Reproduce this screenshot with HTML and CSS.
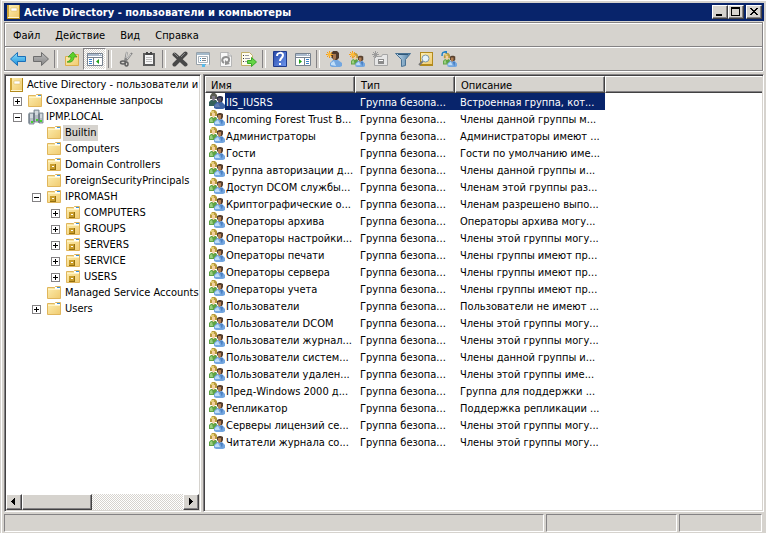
FILE: index.html
```html
<!DOCTYPE html>
<html lang="ru">
<head>
    <meta charset="UTF-8">
    <meta name="viewport" content="width=device-width, initial-scale=1.0">
    <title>Active Directory - пользователи и компьютеры</title>
    <link rel="stylesheet" href="styles.css">
</head>
<body>
    <!-- shared icons -->
    <svg class="sprite" aria-hidden="true">
        <defs>
            <linearGradient id="gold" x1="0" y1="0" x2="1" y2="1"><stop offset="0" stop-color="#fdeeb0"/><stop offset="1" stop-color="#f0cb70"/></linearGradient>
            <linearGradient id="blue" x1="0" y1="0" x2="0" y2="1"><stop offset="0" stop-color="#8fe0fb"/><stop offset="1" stop-color="#1a8fdb"/></linearGradient>
            <linearGradient id="grey" x1="0" y1="0" x2="0" y2="1"><stop offset="0" stop-color="#bdbdbd"/><stop offset="1" stop-color="#858585"/></linearGradient>
            <linearGradient id="help" x1="0" y1="0" x2="1" y2="1"><stop offset="0" stop-color="#2748a8"/><stop offset="1" stop-color="#6e97ee"/></linearGradient>
            <linearGradient id="steel" x1="0" y1="0" x2="1" y2="0"><stop offset="0" stop-color="#cfe4f2"/><stop offset="1" stop-color="#4a7ba3"/></linearGradient>
            <symbol id="i-book" viewBox="0 0 16 16">
                <path d="M1 1h13v14H1z" fill="#b28a1c"/>
                <path d="M2 1h11v12H2z" fill="url(#gold)"/>
                <path d="M1 1h2v13H1z" fill="#cfa536"/>
                <path d="M5 4h6v3H5z" fill="#fff" stroke="#d8b65a" stroke-width=".5"/>
                <path d="M2 13h11v1H2z" fill="#fff6d0"/>
            </symbol>
            <symbol id="i-folder" viewBox="0 0 16 16">
                <path d="M.5 2.500h7l1-1h5v12H.5z" fill="url(#gold)" stroke="#e0b65c"/>
                <path d="M8 2h5v2H8z" fill="#fff"/>
                <path d="M10 2h3v1h-3z" fill="#3c93dc"/>
                <path d="M1 4.500h12" stroke="#fff3c4"/>
            </symbol>
            <symbol id="i-ou" viewBox="0 0 16 16">
                <use href="#i-folder"/>
                <path d="M3 7h6v6H3z" fill="#94700f"/>
                <path d="M3 7h5v5H3z" fill="#c99d2c"/>
                <path d="M5 9h2v1H5z" fill="#fff"/>
            </symbol>
            <symbol id="i-domain" viewBox="0 0 16 16">
                <path d="M6 1h5v12H6zM1 4h5v11H1zM11 4h4v10h-4z" fill="#b5bdc4" stroke="#72808c" stroke-width=".8"/>
                <path d="M7 3h3M7 5h3M2 6h3M2 8h3M12 6h2M12 8h2" stroke="#eef3f6"/>
                <path d="M6 4v9M1 5v9M11 5v9" stroke="#53616e" stroke-width=".8"/>
                <path d="M3 12h2v2H3zM8 10h2v2H8zM12 11h2v2h-2z" fill="#45d12e"/>
            </symbol>
            <symbol id="i-group" viewBox="0 0 16 16">
                <path d="M0 13V9l2-2h5l2 3v3z" fill="#5ea344"/>
                <path d="M1 12V9l2-1 1 4z" fill="#9ccf80"/>
                <path d="M1 3l2-3h3l2 2v4H6L3 6H1z" fill="#b89a3c"/>
                <path d="M2 1h3v2H2z" fill="#e4cf76"/>
                <path d="M3 3h3v3l-1 2H4L3 6z" fill="#f3cfa0"/>
                <path d="M5 15v-3l3-3h5l3 3v3l-2 1H7z" fill="#74a7e0"/>
                <path d="M6 14v-2l3-2 2 4z" fill="#bddcf8"/>
                <path d="M11 10l2 5 1-5z" fill="#4a80c2"/>
                <path d="M8 4l2-1h2l2 1v3l-1 2h-3L8 7z" fill="#57402f"/>
                <path d="M9 5h3v3l-1 2h-1L9 8z" fill="#b27e52"/>
            </symbol>
            <symbol id="i-group-dark" viewBox="0 0 16 16">
                <path d="M0 13V9l2-2h5l2 3v3z" fill="#33605a"/>
                <path d="M1 3l2-3h3l2 2v4H6L3 6H1z" fill="#5b5d53"/>
                <path d="M3 3h3v3l-1 2H4L3 6z" fill="#7c7786"/>
                <path d="M5 15v-3l3-3h5l3 3v3l-2 1H7z" fill="#3e64a6"/>
                <path d="M6 14v-2l3-2 2 4z" fill="#627eb2"/>
                <path d="M8 4l2-1h2l2 1v3l-1 2h-3L8 7z" fill="#2d3049"/>
                <path d="M9 5h3v3l-1 2h-1L9 8z" fill="#5a4f60"/>
            </symbol>
            <symbol id="i-star" viewBox="0 0 8 8">
                <path d="M3.500 0v7M0 3.500h7M1 1l5 5M6 1L1 6" stroke="#f49a16"/>
                <circle cx="3.500" cy="3.500" r="2" fill="#fdbb3a"/>
            </symbol>
        </defs>
    </svg>

    <div class="window">
        <header class="title-bar">
            <svg class="icon"><use href="#i-book"/></svg>
            <h1>Active Directory - пользователи и компьютеры</h1>
            <div class="window-buttons">
                <button type="button" class="raised" aria-label="Свернуть"><svg viewBox="0 0 12 10"><path d="M2 7h6v2H2z"/></svg></button>
                <button type="button" class="raised" aria-label="Развернуть"><svg viewBox="0 0 12 10"><path d="M1 0h9v9H1zM2 2v6h7V2z" fill-rule="evenodd"/></svg></button>
                <button type="button" class="raised close" aria-label="Закрыть"><svg viewBox="0 0 12 10"><path d="M2 1h2v1h1v1h2V2h1V1h2v1H9v1H8v1H7v1h1v1h1v1h1v1H8V7H7V6H5v1H4v1H2V7h1V6h1V5h1V4H4V3H3V2H2z"/></svg></button>
            </div>
        </header>

        <div class="bars">
            <nav class="menu">
                <button type="button">Файл</button>
                <button type="button">Действие</button>
                <button type="button">Вид</button>
                <button type="button">Справка</button>
            </nav>
            <div class="toolbar">
                <button type="button" aria-label="Назад"><svg class="icon" viewBox="0 0 16 16"><path d="M.5 8L7.500 1.500v4h8v5h-8v4z" fill="url(#blue)" stroke="#1b6fb8"/></svg></button>
                <button type="button" aria-label="Вперед"><svg class="icon" viewBox="0 0 16 16"><path d="M15.500 8L8.500 1.500v4h-8v5h8v4z" fill="url(#grey)" stroke="#6d6d6d"/></svg></button>
                <span class="separator"></span>
                <button type="button" aria-label="На уровень вверх"><svg class="icon" viewBox="0 0 16 16"><path d="M1.500 5.500h6l1-2h6v11h-13z" fill="url(#gold)" stroke="#dcae4e"/><path d="M3 11c3-1 4-3 4-5H4l5-5 4 5h-3c0 4-3 6-7 5z" fill="#5bd12b" stroke="#35951a" stroke-width=".7"/></svg></button>
                <button type="button" class="pressed" aria-label="Дерево консоли"><svg class="icon" viewBox="0 0 16 16"><path d="M.5 2.500h15v12H.5z" fill="#fff" stroke="#77828f"/><path d="M1 3h14v2H1z" fill="#a9b9cc"/><path d="M12 3h1v1h-1zM14 3h1v1h-1z" fill="#fff"/><path d="M1 6.500h14M6.500 7v7" stroke="#77828f"/><path d="M2 8.500h3M2 10.500h3M2 12.500h3" stroke="#3881ca"/><path d="M12 8v5l-3-2.500z" fill="#22a51c"/></svg></button>
                <span class="separator"></span>
                <button type="button" aria-label="Вырезать"><svg class="icon" viewBox="0 0 16 16"><path d="M9 1L7 10M14 2L7 11" stroke="#858585" stroke-width="2"/><path d="M9 1L8 7M13 3L9 8" stroke="#d5d5d5"/><ellipse cx="5" cy="11.500" rx="2.500" ry="1.500" fill="none" stroke="#606060" stroke-width="1.500"/><ellipse cx="8.500" cy="13" rx="1.500" ry="2" fill="none" stroke="#606060" stroke-width="1.500"/></svg></button>
                <button type="button" aria-label="Копировать"><svg class="icon" viewBox="0 0 16 16"><path d="M2 2h12v13H2z" fill="#5c5c5c"/><path d="M4 4h8v9H4z" fill="#f7f7f7"/><path d="M5 1h6v3H5z" fill="#444"/><path d="M7 1h2v1H7z" fill="#ddd"/><path d="M5 6.500h6M5 8.500h6M5 10.500h6" stroke="#bbb"/></svg></button>
                <span class="separator"></span>
                <button type="button" aria-label="Удалить"><svg class="icon" viewBox="0 0 16 16"><path d="M2.500 3.500l11 10M13.500 2.500l-11 11" stroke="#484848" stroke-width="4" stroke-linecap="round"/><path d="M2 2l4 4M13 2L9 6" stroke="#888"/></svg></button>
                <button type="button" aria-label="Свойства"><svg class="icon" viewBox="0 0 16 16"><path d="M1.500 1.500h13v12h-13z" fill="#fff" stroke="#98a2aa"/><path d="M2 2h12v2H2z" fill="#a3b9ca"/><path d="M3.500 5.500h9v6h-9z" fill="none" stroke="#a9b4bd"/><path d="M5 7h1v1H5zM5 9h1v1H5z" fill="#2a9ad8"/><path d="M7 7.500h4M7 9.500h4" stroke="#7b858d"/><path d="M7 13h3v3H7z" fill="#55bbec"/><path d="M11 13h3v2h-3z" fill="#ddd"/></svg></button>
                <button type="button" aria-label="Обновить"><svg class="icon" viewBox="0 0 16 16"><path d="M2.500 1.500h8l3 3v11h-11z" fill="#f8f8f8" stroke="#b6b6b6"/><path d="M10 1v4h4" fill="#ddd" stroke="#aaa"/><path d="M6 12c-3-2-2-6 2-6 4 0 4 4 1 6" fill="none" stroke="#909090" stroke-width="2"/><path d="M7 9v5l5-1z" fill="#909090"/></svg></button>
                <button type="button" aria-label="Экспортировать список"><svg class="icon" viewBox="0 0 16 16"><path d="M.5 1.500h8l3 3v10H.5z" fill="#fffdee" stroke="#c2b16b"/><path d="M2 4.500h1M2 7.500h1M2 10.500h1" stroke="#333"/><path d="M4 4.500h4M4 7.500h5M4 10.500h2" stroke="#9b9ba8"/><path d="M6.500 9.500h4v-3L15.500 11l-5 4.500v-3h-4z" fill="#65d545" stroke="#38a829"/></svg></button>
                <span class="separator"></span>
                <button type="button" aria-label="Справка"><svg class="icon" viewBox="0 0 16 16"><path d="M1.500.5h13v15h-13z" fill="url(#help)" stroke="#203a8a"/><path d="M5 5c0-4 6-4 6-1 0 3-3 3-3 6" fill="none" stroke="#fff" stroke-width="2"/><path d="M7 12h2v2H7z" fill="#fff"/></svg></button>
                <button type="button" aria-label="Панель действий"><svg class="icon" viewBox="0 0 16 16"><path d="M.5 2.500h15v12H.5z" fill="#fff" stroke="#77828f"/><path d="M1 3h14v2H1z" fill="#a9b9cc"/><path d="M12 3h1v1h-1zM14 3h1v1h-1z" fill="#fff"/><path d="M1 6.500h14M9.500 7v7" stroke="#77828f"/><path d="M11 8.500h3M11 10.500h3M11 12.500h3" stroke="#3881ca"/><path d="M4 8v5l3-2.500z" fill="#22a51c"/></svg></button>
                <span class="separator"></span>
                <button type="button" aria-label="Создать пользователя"><svg class="icon" viewBox="0 0 16 16"><path d="M4 15v-3l3-3h5l4 3v3l-2 1H6z" fill="#74a7e0"/><path d="M5 14v-2l3-2 2 5z" fill="#c2dff8"/><path d="M5 3l2-3h4l2 2v5l-2 2H8L5 6z" fill="#4f3a2c"/><path d="M7 3h3v4l-1 2H8L7 7z" fill="#a87850"/><use href="#i-star" width="8" height="8"/></svg></button>
                <button type="button" aria-label="Создать группу"><svg class="icon" viewBox="0 0 16 16"><use href="#i-group" x="2" y="2" width="14" height="14"/><use href="#i-star" width="8" height="8"/></svg></button>
                <button type="button" aria-label="Создать подразделение"><svg class="icon" viewBox="0 0 16 16"><path d="M2.500 5.500h7l1-2h5v11h-13z" fill="#e6e6e6" stroke="#a5a5a5"/><path d="M6 8h6v5H6z" fill="#8b8b8b"/><path d="M7 9h4v1H7z" fill="#fff"/><path d="M3.500 0v7M0 3.500h7M1 1l5 5M6 1L1 6" stroke="#9a9a9a"/></svg></button>
                <button type="button" aria-label="Фильтр"><svg class="icon" viewBox="0 0 16 16"><path d="M.5 2.500h15l-5 6v6l-4 1v-7z" fill="url(#steel)" stroke="#4a7293"/><path d="M3 3.500h10" stroke="#2f5879"/></svg></button>
                <button type="button" aria-label="Найти"><svg class="icon" viewBox="0 0 16 16"><path d="M2 1h13v14H2z" fill="#b28a1c"/><path d="M3 2h11v11H3z" fill="url(#gold)"/><path d="M1 14l4-4" stroke="#777" stroke-width="2"/><circle cx="7.500" cy="7.500" r="3.500" fill="#e5f4fb" stroke="#7f98a6"/></svg></button>
                <button type="button" aria-label="Добавить в группу"><svg class="icon" viewBox="0 0 16 16"><use href="#i-group" x="2" y="2" width="14" height="14"/><path d="M1 5c0-4 1-4 4-4" fill="none" stroke="#2180c4" stroke-width="1.500"/><path d="M3 0h3v3z" fill="#2180c4"/></svg></button>
            </div>
        </div>

        <main class="panes">
            <section class="tree-pane sunken">
                <ul class="tree">
                    <li class="root"><svg class="icon"><use href="#i-book"/></svg><span>Active Directory - пользователи и</span></li>
                    <li class="level-1"><button type="button" class="toggle plus" aria-label="Развернуть"></button><svg class="icon"><use href="#i-folder"/></svg><span>Сохраненные запросы</span></li>
                    <li class="level-1"><button type="button" class="toggle" aria-label="Свернуть"></button><svg class="icon"><use href="#i-domain"/></svg><span>IPMP.LOCAL</span></li>
                    <li class="level-2"><svg class="icon"><use href="#i-folder"/></svg><span class="current">Builtin</span></li>
                    <li class="level-2"><svg class="icon"><use href="#i-folder"/></svg><span>Computers</span></li>
                    <li class="level-2"><svg class="icon"><use href="#i-ou"/></svg><span>Domain Controllers</span></li>
                    <li class="level-2"><svg class="icon"><use href="#i-folder"/></svg><span>ForeignSecurityPrincipals</span></li>
                    <li class="level-2"><button type="button" class="toggle" aria-label="Свернуть"></button><svg class="icon"><use href="#i-ou"/></svg><span>IPROMASH</span></li>
                    <li class="level-3"><button type="button" class="toggle plus" aria-label="Развернуть"></button><svg class="icon"><use href="#i-ou"/></svg><span>COMPUTERS</span></li>
                    <li class="level-3"><button type="button" class="toggle plus" aria-label="Развернуть"></button><svg class="icon"><use href="#i-ou"/></svg><span>GROUPS</span></li>
                    <li class="level-3"><button type="button" class="toggle plus" aria-label="Развернуть"></button><svg class="icon"><use href="#i-ou"/></svg><span>SERVERS</span></li>
                    <li class="level-3"><button type="button" class="toggle plus" aria-label="Развернуть"></button><svg class="icon"><use href="#i-ou"/></svg><span>SERVICE</span></li>
                    <li class="level-3"><button type="button" class="toggle plus" aria-label="Развернуть"></button><svg class="icon"><use href="#i-ou"/></svg><span>USERS</span></li>
                    <li class="level-2"><svg class="icon"><use href="#i-folder"/></svg><span>Managed Service Accounts</span></li>
                    <li class="level-2"><button type="button" class="toggle plus" aria-label="Развернуть"></button><svg class="icon"><use href="#i-folder"/></svg><span>Users</span></li>
                </ul>
                <div class="scrollbar">
                    <button type="button" class="raised" aria-label="Влево"><svg viewBox="0 0 12 12"><path d="M7 2v7H6V8H5V7H4V6H3V5h1V4h1V3h1V2z"/></svg></button>
                    <div class="thumb raised"></div>
                    <button type="button" class="raised next" aria-label="Вправо"><svg viewBox="0 0 12 12"><path d="M4 2v7h1V8h1V7h1V6h1V5H7V4H6V3H5V2z"/></svg></button>
                </div>
            </section>

            <section class="list-pane sunken">
                <table class="list">
                    <thead>
                        <tr><th class="name">Имя</th><th class="type">Тип</th><th class="about">Описание</th><th class="rest"></th></tr>
                    </thead>
                    <tbody>
                        <tr class="selected"><td><div class="entry"><svg class="icon"><use href="#i-group-dark"/></svg><span>IIS_IUSRS</span></div></td><td>Группа безопа...</td><td>Встроенная группа, кот...</td></tr>
                        <tr><td><div class="entry"><svg class="icon"><use href="#i-group"/></svg><span>Incoming Forest Trust B...</span></div></td><td>Группа безопа...</td><td>Члены данной группы м...</td></tr>
                        <tr><td><div class="entry"><svg class="icon"><use href="#i-group"/></svg><span>Администраторы</span></div></td><td>Группа безопа...</td><td>Администраторы имеют ...</td></tr>
                        <tr><td><div class="entry"><svg class="icon"><use href="#i-group"/></svg><span>Гости</span></div></td><td>Группа безопа...</td><td>Гости по умолчанию име...</td></tr>
                        <tr><td><div class="entry"><svg class="icon"><use href="#i-group"/></svg><span>Группа авторизации д...</span></div></td><td>Группа безопа...</td><td>Члены данной группы и...</td></tr>
                        <tr><td><div class="entry"><svg class="icon"><use href="#i-group"/></svg><span>Доступ DCOM службы...</span></div></td><td>Группа безопа...</td><td>Членам этой группы раз...</td></tr>
                        <tr><td><div class="entry"><svg class="icon"><use href="#i-group"/></svg><span>Криптографические о...</span></div></td><td>Группа безопа...</td><td>Членам разрешено выпо...</td></tr>
                        <tr><td><div class="entry"><svg class="icon"><use href="#i-group"/></svg><span>Операторы архива</span></div></td><td>Группа безопа...</td><td>Операторы архива могу...</td></tr>
                        <tr><td><div class="entry"><svg class="icon"><use href="#i-group"/></svg><span>Операторы настройки...</span></div></td><td>Группа безопа...</td><td>Члены этой группы могу...</td></tr>
                        <tr><td><div class="entry"><svg class="icon"><use href="#i-group"/></svg><span>Операторы печати</span></div></td><td>Группа безопа...</td><td>Члены группы имеют пр...</td></tr>
                        <tr><td><div class="entry"><svg class="icon"><use href="#i-group"/></svg><span>Операторы сервера</span></div></td><td>Группа безопа...</td><td>Члены группы имеют пр...</td></tr>
                        <tr><td><div class="entry"><svg class="icon"><use href="#i-group"/></svg><span>Операторы учета</span></div></td><td>Группа безопа...</td><td>Члены группы имеют пр...</td></tr>
                        <tr><td><div class="entry"><svg class="icon"><use href="#i-group"/></svg><span>Пользователи</span></div></td><td>Группа безопа...</td><td>Пользователи не имеют ...</td></tr>
                        <tr><td><div class="entry"><svg class="icon"><use href="#i-group"/></svg><span>Пользователи DCOM</span></div></td><td>Группа безопа...</td><td>Члены этой группы могу...</td></tr>
                        <tr><td><div class="entry"><svg class="icon"><use href="#i-group"/></svg><span>Пользователи журнал...</span></div></td><td>Группа безопа...</td><td>Члены этой группы могу...</td></tr>
                        <tr><td><div class="entry"><svg class="icon"><use href="#i-group"/></svg><span>Пользователи систем...</span></div></td><td>Группа безопа...</td><td>Члены данной группы и...</td></tr>
                        <tr><td><div class="entry"><svg class="icon"><use href="#i-group"/></svg><span>Пользователи удален...</span></div></td><td>Группа безопа...</td><td>Члены этой группы име...</td></tr>
                        <tr><td><div class="entry"><svg class="icon"><use href="#i-group"/></svg><span>Пред-Windows 2000 д...</span></div></td><td>Группа безопа...</td><td>Группа для поддержки ...</td></tr>
                        <tr><td><div class="entry"><svg class="icon"><use href="#i-group"/></svg><span>Репликатор</span></div></td><td>Группа безопа...</td><td>Поддержка репликации ...</td></tr>
                        <tr><td><div class="entry"><svg class="icon"><use href="#i-group"/></svg><span>Серверы лицензий се...</span></div></td><td>Группа безопа...</td><td>Члены этой группы могу...</td></tr>
                        <tr><td><div class="entry"><svg class="icon"><use href="#i-group"/></svg><span>Читатели журнала со...</span></div></td><td>Группа безопа...</td><td>Члены этой группы могу...</td></tr>
                    </tbody>
                </table>
            </section>
        </main>

        <footer class="status">
            <div class="status-main"></div>
            <div class="status-middle"></div>
            <div class="status-end"></div>
        </footer>
    </div>
</body>
</html>
```
FILE: styles.css
```css
* {
    box-sizing: border-box;
}
body {
    margin: 0;
    font-family: "DejaVu Sans Condensed", "DejaVu Sans", sans-serif;
    font-size: 11px;
    line-height: 16px;
    color: #000;
    background: #d6d3ce;
}
button {
    font: inherit;
    color: inherit;
    padding: 0;
    border: 0;
    background: none;
}
svg {
    display: block;
}
.sprite {
    position: absolute;
    width: 0;
    height: 0;
}
.icon {
    width: 16px;
    height: 16px;
    flex: none;
}
.window {
    display: flex;
    flex-direction: column;
    min-height: 100vh;
    padding: 3px 2px 1px 4px;
    box-shadow: inset 1px 0 #d6d3ce, inset 2px 1px #fff;
}
.raised {
    background: #d6d3ce;
    border: 1px solid;
    border-color: #fff #424142 #424142 #fff;
    box-shadow: inset -1px -1px #848284;
}
.sunken {
    background: #fff;
    border: 1px solid;
    border-color: #848284 #fff #fff #848284;
    box-shadow: inset 1px 1px #424142, inset -1px -1px #d6d3ce;
    padding: 2px 1px 1px 1px;
}

/* title */
.title-bar {
    display: flex;
    align-items: center;
    height: 18px;
    padding: 0 2px;
    background: #08246b;
    color: #fff;
}
.title-bar h1 {
    flex: 1;
    margin: 0;
    padding: 1px 0 0 2px;
    font-size: 11px;
    line-height: 16px;
    white-space: nowrap;
}
.window-buttons {
    display: flex;
}
.window-buttons button {
    width: 16px;
    height: 14px;
    padding: 1px;
}
.window-buttons .close {
    margin-left: 2px;
}
.window-buttons svg {
    width: 12px;
    height: 10px;
}

/* menu and toolbar */
.bars {
    margin: 1px 1px 0 0;
    border: 1px solid #848284;
    box-shadow: inset 1px 1px #fff, 0 1px #fff, 1px 0 #fff;
}
.menu {
    display: flex;
    gap: 15px;
    height: 24px;
    padding: 2px 8px 0;
    border-bottom: 1px solid #848284;
}
.toolbar {
    display: flex;
    padding-left: 1px;
    border-top: 1px solid #fff;
}
.toolbar button {
    display: flex;
    align-items: center;
    justify-content: center;
    width: 23px;
    height: 22px;
}
.toolbar .pressed {
    border: 1px solid;
    border-color: #848284 #fff #fff #848284;
    background: repeating-conic-gradient(#fff 0 25%, #d6d3ce 0 50%) 0 0 / 2px 2px;
}
.separator {
    width: 8px;
    padding: 2px;
}
.separator::before {
    content: "";
    display: block;
    width: 2px;
    height: 18px;
    border-left: 1px solid #848284;
    border-right: 1px solid #fff;
}

/* panes */
.panes {
    flex: 1;
    display: flex;
    gap: 2px;
    margin-top: 3px;
}
.tree-pane {
    display: flex;
    flex-direction: column;
    justify-content: space-between;
    width: 197px;
}
.tree {
    list-style: none;
    margin: 0;
    padding: 0;
}
.tree li {
    display: flex;
    align-items: center;
    height: 16px;
    white-space: nowrap;
}
.tree span {
    padding-left: 2px;
}
.tree .current {
    padding-right: 2px;
    background: #d6d3ce;
}
.root {
    padding-left: 3px;
}
.level-1 {
    padding-left: 22px;
}
.level-2 {
    padding-left: 41px;
}
.level-3 {
    padding-left: 60px;
}
.toggle {
    flex: none;
    width: 9px;
    height: 9px;
    margin: 0 6px 0 -15px;
    border: 1px solid #848284;
    background: linear-gradient(#000, #000) center / 5px 1px no-repeat;
}
.toggle.plus {
    background: linear-gradient(#000, #000) center / 5px 1px no-repeat, linear-gradient(#000, #000) center / 1px 5px no-repeat;
}
.scrollbar {
    display: flex;
    height: 16px;
    background: repeating-conic-gradient(#fff 0 25%, #d6d3ce 0 50%) 0 0 / 2px 2px;
}
.scrollbar button {
    width: 16px;
    height: 16px;
    padding: 1px;
}
.scrollbar svg {
    width: 12px;
    height: 12px;
}
.thumb {
    width: 70px;
}
.next {
    margin-left: auto;
}

.list-pane {
    flex: 1;
    min-width: 0;
    padding-top: 1px;
}
.list {
    width: 100%;
    table-layout: fixed;
    border-collapse: separate;
    border-spacing: 0;
}
.list th {
    height: 17px;
    padding: 2px 5px 0;
    background: #d6d3ce;
    border: 1px solid;
    border-color: #fff #424142 #424142 #fff;
    box-shadow: inset -1px -1px #848284;
    font-weight: normal;
    line-height: 13px;
    text-align: left;
}
.list .name {
    width: 150px;
}
.list .type {
    width: 100px;
}
.list .about {
    width: 150px;
}
.list .rest {
    border-right: 0;
    box-shadow: inset 0 -1px #848284;
}
.list td {
    height: 17px;
    padding: 2px 0 0 5px;
    line-height: 15px;
    white-space: nowrap;
    overflow: hidden;
}
.list td:first-child {
    padding: 0 0 0 4px;
}
.entry {
    display: flex;
}
.entry span {
    flex: 1;
    padding: 2px 0 0 1px;
}
.selected {
    color: #fff;
}
.selected td + td,
.selected .entry span {
    background: #08246b;
}

/* status bar */
.status {
    display: flex;
    gap: 2px;
    height: 18px;
    margin: 2px 2px 0 0;
}
.status div {
    border: 1px solid;
    border-color: #848284 #fff #fff #848284;
}
.status-main {
    flex: 1;
}
.status-middle {
    width: 131px;
}
.status-end {
    width: 83px;
}
```
